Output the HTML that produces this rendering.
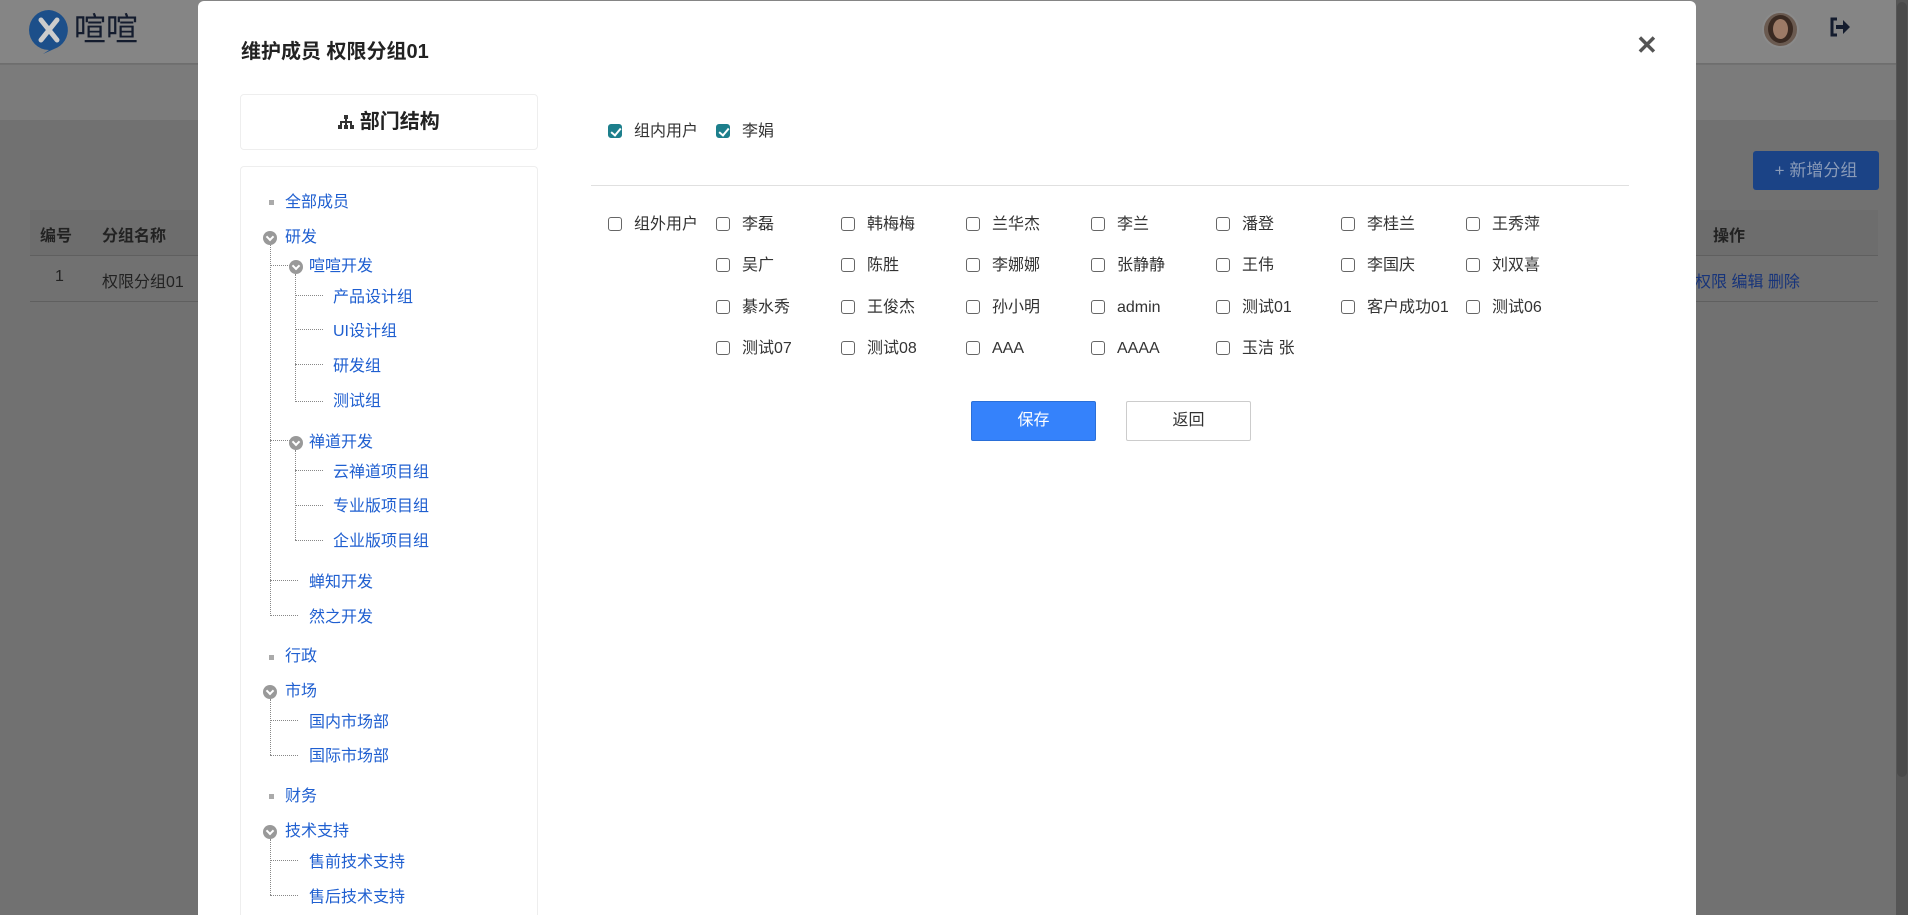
<!DOCTYPE html>
<html><head><meta charset="utf-8"><style>
*{margin:0;padding:0;box-sizing:border-box}
html,body{width:1908px;height:915px;overflow:hidden}
body{position:relative;font-family:"Liberation Sans","Noto Sans CJK SC",sans-serif;background:#717171;font-size:16px;color:#333}
.a{position:absolute;white-space:nowrap}
.tr{position:absolute;color:#1f5fd0;font-size:16px;line-height:20px;white-space:nowrap}
.dot{position:absolute;width:5px;height:5px;background:#aaa}
.ic{position:absolute;width:14px;height:14px;border-radius:50%;background:#999}
.ic:after{content:"";position:absolute;left:4px;top:3px;width:4px;height:4px;border-right:2px solid #fff;border-bottom:2px solid #fff;transform:rotate(45deg)}
.vl{position:absolute;border-left:1px dotted #888;width:0}
.hl{position:absolute;border-top:1px dotted #888;height:0}
.cb{position:absolute;width:14px;height:14px;border:1px solid #666;border-radius:3px;background:#fff}
.cb.on{background:#1d7f8c;border-color:#1d7f8c}
.cb.on:after{content:"";position:absolute;left:4px;top:1px;width:4px;height:8px;border-right:2px solid #fff;border-bottom:2px solid #fff;transform:rotate(40deg)}
.lb{position:absolute;font-size:16px;line-height:20px;color:#333;white-space:nowrap}
</style></head><body>
<div class="a" style="left:0;top:0;width:1908px;height:64px;background:#858585;border-bottom:1px solid #6e6e6e"></div>
<div class="a" style="left:0;top:65px;width:1908px;height:55px;background:#7b7b7b"></div>
<svg class="a" style="left:28px;top:9px" width="42" height="46" viewBox="0 0 42 46"><path d="M21 1a20 20 0 1 0 0 40l-6 4 11-5A20 20 0 0 0 21 1z" fill="#1c4f8a"/><path d="M13 11l16 20M29 11L13 31" stroke="#ccc" stroke-width="5" stroke-linecap="round"/></svg>
<div class="a" style="left:74px;top:9px;font-size:32px;color:#141c2e;line-height:40px">喧喧</div>
<div class="a" style="left:1762px;top:11px;width:37px;height:37px;border-radius:50%;background:#6a5a50;border:2px solid #8a8a8a"></div>
<div class="a" style="left:1768px;top:15px;width:25px;height:28px;border-radius:50%;background:#3a2a22"></div>
<div class="a" style="left:1773px;top:19px;width:15px;height:20px;border-radius:50%;background:#9c7a66"></div>
<svg class="a" style="left:1829px;top:17px" width="22" height="20" viewBox="0 0 22 20"><path d="M8 2H3v16h5" fill="none" stroke="#141c2e" stroke-width="3"/><path d="M7 8h7V3l7 7-7 7v-5H7z" fill="#141c2e"/></svg>
<div class="a" style="left:1753px;top:151px;width:126px;height:39px;background:#1b4386;border-radius:3px;color:#8a9bb8;font-size:17px;line-height:39px;text-align:center">+ 新增分组</div>
<div class="a" style="left:30px;top:210px;width:1848px;height:46px;background:#6d6d6d;border-bottom:1px solid #5f5f5f"></div>
<div class="a" style="left:40px;top:222px;font-weight:bold;color:#222;font-size:16px">编号</div>
<div class="a" style="left:102px;top:222px;font-weight:bold;color:#222;font-size:16px">分组名称</div>
<div class="a" style="left:1713px;top:222px;font-weight:bold;color:#222;font-size:16px">操作</div>
<div class="a" style="left:30px;top:301px;width:1848px;height:1px;background:#5f5f5f"></div>
<div class="a" style="left:55px;top:268px;color:#222;font-size:16px">1</div>
<div class="a" style="left:102px;top:268px;color:#222;font-size:16px">权限分组01</div>
<div class="a" style="left:1695px;top:268px;color:#17347a;font-size:16px">权限 编辑 删除</div>
<div class="a" style="left:1896px;top:0;width:12px;height:915px;background:#555"></div>
<div class="a" style="left:1897px;top:2px;width:10px;height:775px;background:#4a4a4a;border-radius:5px"></div>

<div class="a" style="left:198px;top:1px;width:1498px;height:914px;background:#fff;border-radius:6px 6px 0 0"></div>
<div class="a" style="left:241px;top:35px;font-size:20px;font-weight:bold;color:#222">维护成员 权限分组01</div>
<div class="a" style="left:1636px;top:30px;font-size:26px;font-weight:bold;color:#555">✕</div>
<div class="a" style="left:240px;top:94px;width:298px;height:56px;border:1px solid #eee;border-radius:4px;text-align:center;line-height:54px;font-size:20px;font-weight:bold;color:#222"><svg width="16" height="14" viewBox="0 0 16 14" style="vertical-align:-1px"><rect x="6" y="0" width="4" height="4" fill="#333"/><rect x="7" y="4" width="2" height="3" fill="#333"/><rect x="2" y="6" width="12" height="2" fill="#333"/><rect x="2" y="6" width="2" height="4" fill="#333"/><rect x="12" y="6" width="2" height="4" fill="#333"/><rect x="0" y="10" width="4" height="4" fill="#333"/><rect x="6" y="10" width="4" height="4" fill="#333"/><rect x="12" y="10" width="4" height="4" fill="#333"/><rect x="7" y="7" width="2" height="3" fill="#333"/></svg> 部门结构</div>
<div class="a" style="left:240px;top:166px;width:298px;height:749px;border:1px solid #eee;border-bottom:none;border-radius:4px 4px 0 0"></div>

<div class="dot" style="left:269px;top:200px"></div><div class="tr" style="left:285px;top:193px">全部成员</div>
<div class="ic" style="left:263px;top:231px"></div><div class="tr" style="left:285px;top:228px">研发</div>
<div class="vl" style="left:270px;top:245px;height:371px"></div>
<div class="hl" style="left:270px;top:265px;width:20px"></div>
<div class="ic" style="left:289px;top:260px"></div><div class="tr" style="left:309px;top:257px">喧喧开发</div>
<div class="vl" style="left:295px;top:274px;height:128px"></div>
<div class="hl" style="left:295px;top:295px;width:28px"></div><div class="tr" style="left:333px;top:288px">产品设计组</div>
<div class="hl" style="left:295px;top:329px;width:28px"></div><div class="tr" style="left:333px;top:322px">UI设计组</div>
<div class="hl" style="left:295px;top:364px;width:28px"></div><div class="tr" style="left:333px;top:357px">研发组</div>
<div class="hl" style="left:295px;top:401px;width:28px"></div><div class="tr" style="left:333px;top:392px">测试组</div>
<div class="hl" style="left:270px;top:440px;width:20px"></div>
<div class="ic" style="left:289px;top:436px"></div><div class="tr" style="left:309px;top:433px">禅道开发</div>
<div class="vl" style="left:295px;top:450px;height:90px"></div>
<div class="hl" style="left:295px;top:470px;width:28px"></div><div class="tr" style="left:333px;top:463px">云禅道项目组</div>
<div class="hl" style="left:295px;top:505px;width:28px"></div><div class="tr" style="left:333px;top:497px">专业版项目组</div>
<div class="hl" style="left:295px;top:540px;width:28px"></div><div class="tr" style="left:333px;top:532px">企业版项目组</div>
<div class="hl" style="left:270px;top:580px;width:28px"></div><div class="tr" style="left:309px;top:573px">蝉知开发</div>
<div class="hl" style="left:270px;top:615px;width:28px"></div><div class="tr" style="left:309px;top:608px">然之开发</div>
<div class="dot" style="left:269px;top:655px"></div><div class="tr" style="left:285px;top:647px">行政</div>
<div class="ic" style="left:263px;top:685px"></div><div class="tr" style="left:285px;top:682px">市场</div>
<div class="vl" style="left:270px;top:699px;height:56px"></div>
<div class="hl" style="left:270px;top:720px;width:28px"></div><div class="tr" style="left:309px;top:713px">国内市场部</div>
<div class="hl" style="left:270px;top:755px;width:28px"></div><div class="tr" style="left:309px;top:747px">国际市场部</div>
<div class="dot" style="left:269px;top:794px"></div><div class="tr" style="left:285px;top:787px">财务</div>
<div class="ic" style="left:263px;top:825px"></div><div class="tr" style="left:285px;top:822px">技术支持</div>
<div class="vl" style="left:270px;top:839px;height:56px"></div>
<div class="hl" style="left:270px;top:860px;width:28px"></div><div class="tr" style="left:309px;top:853px">售前技术支持</div>
<div class="hl" style="left:270px;top:895px;width:28px"></div><div class="tr" style="left:309px;top:888px">售后技术支持</div>

<div class="cb on" style="left:608px;top:124px"></div><div class="lb" style="left:634px;top:122px">组内用户</div>
<div class="cb on" style="left:716px;top:124px"></div><div class="lb" style="left:742px;top:122px">李娟</div>
<div class="a" style="left:591px;top:185px;width:1038px;height:1px;background:#e0e0e0"></div>
<div class="cb" style="left:608px;top:217px"></div><div class="lb" style="left:634px;top:215px">组外用户</div>

<div class="cb" style="left:716px;top:217px"></div><div class="lb" style="left:742px;top:215px">李磊</div>
<div class="cb" style="left:841px;top:217px"></div><div class="lb" style="left:867px;top:215px">韩梅梅</div>
<div class="cb" style="left:966px;top:217px"></div><div class="lb" style="left:992px;top:215px">兰华杰</div>
<div class="cb" style="left:1091px;top:217px"></div><div class="lb" style="left:1117px;top:215px">李兰</div>
<div class="cb" style="left:1216px;top:217px"></div><div class="lb" style="left:1242px;top:215px">潘登</div>
<div class="cb" style="left:1341px;top:217px"></div><div class="lb" style="left:1367px;top:215px">李桂兰</div>
<div class="cb" style="left:1466px;top:217px"></div><div class="lb" style="left:1492px;top:215px">王秀萍</div>

<div class="cb" style="left:716px;top:258px"></div><div class="lb" style="left:742px;top:256px">吴广</div>
<div class="cb" style="left:841px;top:258px"></div><div class="lb" style="left:867px;top:256px">陈胜</div>
<div class="cb" style="left:966px;top:258px"></div><div class="lb" style="left:992px;top:256px">李娜娜</div>
<div class="cb" style="left:1091px;top:258px"></div><div class="lb" style="left:1117px;top:256px">张静静</div>
<div class="cb" style="left:1216px;top:258px"></div><div class="lb" style="left:1242px;top:256px">王伟</div>
<div class="cb" style="left:1341px;top:258px"></div><div class="lb" style="left:1367px;top:256px">李国庆</div>
<div class="cb" style="left:1466px;top:258px"></div><div class="lb" style="left:1492px;top:256px">刘双喜</div>

<div class="cb" style="left:716px;top:300px"></div><div class="lb" style="left:742px;top:298px">綦水秀</div>
<div class="cb" style="left:841px;top:300px"></div><div class="lb" style="left:867px;top:298px">王俊杰</div>
<div class="cb" style="left:966px;top:300px"></div><div class="lb" style="left:992px;top:298px">孙小明</div>
<div class="cb" style="left:1091px;top:300px"></div><div class="lb" style="left:1117px;top:298px">admin</div>
<div class="cb" style="left:1216px;top:300px"></div><div class="lb" style="left:1242px;top:298px">测试01</div>
<div class="cb" style="left:1341px;top:300px"></div><div class="lb" style="left:1367px;top:298px">客户成功01</div>
<div class="cb" style="left:1466px;top:300px"></div><div class="lb" style="left:1492px;top:298px">测试06</div>

<div class="cb" style="left:716px;top:341px"></div><div class="lb" style="left:742px;top:339px">测试07</div>
<div class="cb" style="left:841px;top:341px"></div><div class="lb" style="left:867px;top:339px">测试08</div>
<div class="cb" style="left:966px;top:341px"></div><div class="lb" style="left:992px;top:339px">AAA</div>
<div class="cb" style="left:1091px;top:341px"></div><div class="lb" style="left:1117px;top:339px">AAAA</div>
<div class="cb" style="left:1216px;top:341px"></div><div class="lb" style="left:1242px;top:339px">玉洁 张</div>

<div class="a" style="left:971px;top:401px;width:125px;height:40px;background:#3582fb;border:1px solid #2a6fd8;border-radius:2px;color:#fff;text-align:center;line-height:38px;font-size:16px">保存</div>
<div class="a" style="left:1126px;top:401px;width:125px;height:40px;background:#fff;border:1px solid #ccc;border-radius:2px;color:#333;text-align:center;line-height:38px;font-size:16px">返回</div>
</body></html>
